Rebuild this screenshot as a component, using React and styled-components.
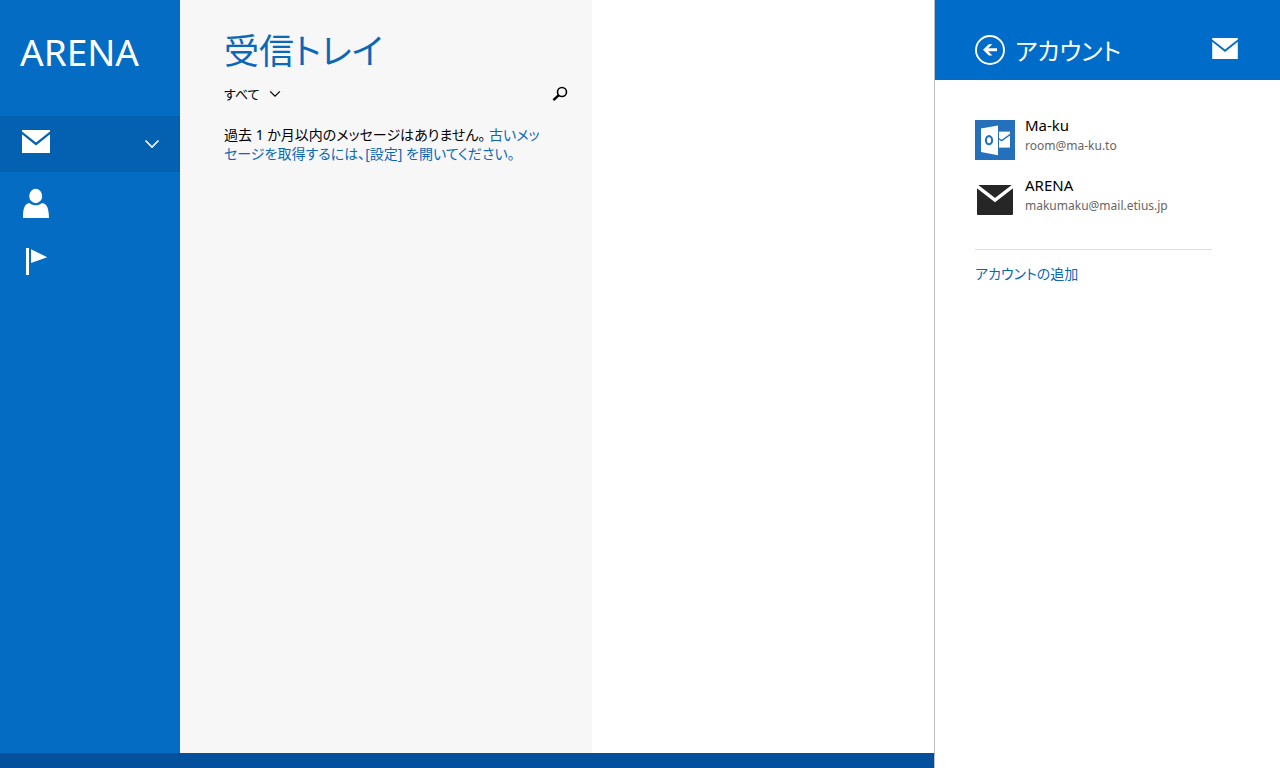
import styled, { createGlobalStyle } from 'styled-components';

const accounts = [
  { name: 'Ma-ku', address: 'room@ma-ku.to', type: 'outlook' },
  { name: 'ARENA', address: 'makumaku@mail.etius.jp', type: 'mail' },
];

const MailIcon = ({ width, height }) => (
  <svg width={width} height={height} viewBox='0 0 28 23' fill='currentColor'>
    <path d='M0 0H28V1.6L14 12.6L0 1.6Z' />
    <path d='M0 4.2L14 15.4L28 4.2V23H0Z' />
  </svg>
);

const PersonIcon = () => (
  <svg width='32' height='32' viewBox='0 0 32 32' fill='currentColor'>
    <ellipse cx='15.7' cy='10' rx='6.5' ry='7.2' />
    <path d='M3 32C3 25 3.6 20.5 6.4 18.2C7.6 17.2 9 17.2 10 17.3C13 20 18.4 20 21.4 17.3C22.5 17.2 24 17.2 25.2 18.2C28 20.5 28.8 25 29 32Z' />
  </svg>
);

const FlagIcon = () => (
  <svg width='32' height='32' viewBox='0 0 32 32' fill='currentColor'>
    <path d='M6 2H9V29H6Z' />
    <path d='M11 3.2L27.2 11.2L11 17Z' />
  </svg>
);

const ChevronIcon = ({ size, stroke }) => (
  <svg width={size} height={size} viewBox='0 0 16 16' fill='none'>
    <path d='M1.5 4.5L8 11L14.5 4.5' stroke='currentColor' strokeWidth={stroke} />
  </svg>
);

const SearchIcon = () => (
  <svg width='16' height='16' viewBox='0 0 16 16' fill='none'>
    <circle cx='10' cy='6' r='4.5' stroke='currentColor' strokeWidth='1.6' />
    <path d='M6.8 9.2L1.4 14.2' stroke='currentColor' strokeWidth='2.4' />
  </svg>
);

const BackIcon = () => (
  <svg width='30' height='30' viewBox='0 0 30 30' fill='none'>
    <circle cx='15' cy='15' r='14' stroke='currentColor' strokeWidth='1.9' />
    <path
      d='M8 14.8L13.8 9.2H17.4L13.2 13.3H22V16.3H13.2L17.4 20.4H13.8Z'
      fill='currentColor'
    />
  </svg>
);

const OutlookIcon = () => (
  <svg width='40' height='40' viewBox='0 0 40 40'>
    <rect width='40' height='40' fill='#2470bb' />
    <path d='M6 8.4L23 5.4V35.2L6 32Z' fill='#fff' />
    <path d='M24 11.6H35V27.6H24Z' fill='#fff' />
    <path d='M23.6 18.4L26.6 20.6L35.4 14.4' fill='none' stroke='#2470bb' strokeWidth='1.3' />
    <path d='M23.5 11V28' stroke='#2470bb' />
    <ellipse cx='14' cy='20.2' rx='3.1' ry='4.1' fill='none' stroke='#2470bb' strokeWidth='2.1' />
  </svg>
);

const DarkMailIcon = () => (
  <svg width='40' height='40' viewBox='0 0 40 40'>
    <rect x='2' y='5' width='36' height='30' rx='1' fill='#262626' />
    <path d='M0 4.6L20 20L40 4.6' fill='none' stroke='#fff' strokeWidth='3.4' />
  </svg>
);

const App = () => {
  return (
    <>
      <GlobalStyle />
      <Screen>
        <MailApp>
          <Columns>
            <Sidebar>
              <AccountTitle>ARENA</AccountTitle>
              <nav>
                <NavButton $active aria-label='メール'>
                  <MailSlot>
                    <MailIcon width={28} height={23} />
                  </MailSlot>
                  <ChevronIcon size={16} stroke={1.6} />
                </NavButton>
                <NavButton aria-label='People'>
                  <PersonIcon />
                </NavButton>
                <NavButton aria-label='フラグ'>
                  <FlagIcon />
                </NavButton>
              </nav>
            </Sidebar>
            <MessageList>
              <FolderTitle>受信トレイ</FolderTitle>
              <Toolbar>
                <Filter>
                  <FilterSelect aria-label='フィルター'>
                    <option>すべて</option>
                  </FilterSelect>
                  <ChevronIcon size={12} stroke={1.6} />
                </Filter>
                <SearchButton aria-label='検索'>
                  <SearchIcon />
                </SearchButton>
              </Toolbar>
              <EmptyText>
                過去 1 か月以内のメッセージはありません。{' '}
                <Link href='#settings'>
                  古いメッセージを取得するには、[設定] を開いてください。
                </Link>
              </EmptyText>
            </MessageList>
            <ReadingPane />
          </Columns>
          <BottomBar />
        </MailApp>
        <Flyout>
          <FlyoutHeader>
            <BackButton aria-label='戻る'>
              <BackIcon />
            </BackButton>
            <FlyoutTitle>アカウント</FlyoutTitle>
            <HeaderMail>
              <MailIcon width={26} height={21} />
            </HeaderMail>
          </FlyoutHeader>
          <FlyoutBody>
            {accounts.map((account) => (
              <AccountButton key={account.address}>
                {account.type === 'outlook' ? <OutlookIcon /> : <DarkMailIcon />}
                <AccountText>
                  <AccountName>{account.name}</AccountName>
                  <AccountAddress>{account.address}</AccountAddress>
                </AccountText>
              </AccountButton>
            ))}
            <AddAccount>
              <Link href='#add'>アカウントの追加</Link>
            </AddAccount>
          </FlyoutBody>
        </Flyout>
      </Screen>
    </>
  );
};

const GlobalStyle = createGlobalStyle`
  * {
    box-sizing: border-box;
  }
  body {
    margin: 0;
    background: #fff;
    color: #000;
    font-family: 'Noto Sans', 'Noto Sans CJK JP', sans-serif;
    font-feature-settings: 'palt';
  }
  button, select {
    margin: 0;
    padding: 0;
    border: 0;
    background: none;
    color: inherit;
    font: inherit;
    font-feature-settings: inherit;
    cursor: pointer;
  }
  svg {
    display: block;
    flex-shrink: 0;
  }
`;

const Screen = styled.div`
  display: flex;
  min-height: 100vh;
`;

const MailApp = styled.div`
  display: flex;
  flex: 1;
  flex-direction: column;
`;

const Columns = styled.div`
  display: flex;
  flex: 1;
`;

const Sidebar = styled.aside`
  width: 180px;
  background: #056cc4;
  color: #fff;
`;

const AccountTitle = styled.h1`
  margin: 0;
  padding: 28px 20px 40px;
  font-size: 37px;
  font-weight: 400;
  line-height: 48px;
`;

const NavButton = styled.button`
  display: flex;
  align-items: center;
  justify-content: space-between;
  width: 100%;
  height: ${(props) => (props.$active ? '56px' : '60px')};
  padding: 0 20px;
  background: ${(props) => (props.$active ? '#0461b1' : 'transparent')};
`;

const MailSlot = styled.span`
  height: 28px;
  padding-left: 2px;
`;

const MessageList = styled.main`
  width: 412px;
  padding: 28px 24px 0 44px;
  background: #f7f7f7;
`;

const FolderTitle = styled.h2`
  margin: 0;
  color: #0a68b8;
  font-size: 35px;
  font-weight: 400;
  line-height: 46px;
`;

const Toolbar = styled.div`
  display: flex;
  align-items: center;
  justify-content: space-between;
  height: 40px;
`;

const Filter = styled.label`
  display: flex;
  align-items: center;
  gap: 8px;
  font-size: 13px;
`;

const FilterSelect = styled.select`
  appearance: none;
  line-height: 20px;
`;

const SearchButton = styled.button`
  height: 20px;
`;

const EmptyText = styled.p`
  max-width: 322px;
  margin: 0;
  padding-top: 11px;
  font-size: 14px;
  line-height: 19px;
`;

const Link = styled.a`
  color: #0a68b8;
  text-decoration: none;
`;

const ReadingPane = styled.section`
  flex: 1;
  background: #fff;
`;

const BottomBar = styled.footer`
  height: 15px;
  background: #05509c;
`;

const Flyout = styled.aside`
  width: 346px;
  border-left: 1px solid #bdbdbd;
  background: #fff;
`;

const FlyoutHeader = styled.header`
  display: flex;
  align-items: center;
  height: 80px;
  padding: 20px 42px 0 40px;
  background: #006cca;
  color: #fff;
`;

const BackButton = styled.button`
  margin-right: 10px;
`;

const FlyoutTitle = styled.h2`
  flex: 1;
  margin: 0;
  padding-top: 2px;
  font-size: 24px;
  font-weight: 400;
  line-height: 32px;
`;

const HeaderMail = styled.span`
  padding-bottom: 4px;
`;

const FlyoutBody = styled.div`
  padding: 40px 68px 0 40px;
`;

const AccountButton = styled.button`
  display: flex;
  gap: 10px;
  width: 100%;
  margin-bottom: 20px;
  text-align: left;
`;

const AccountText = styled.span`
  display: flex;
  flex-direction: column;
`;

const AccountName = styled.span`
  padding-bottom: 10px;
  font-size: 15px;
  line-height: 10px;
`;

const AccountAddress = styled.span`
  color: #666;
  font-size: 12px;
  line-height: 12px;
`;

const AddAccount = styled.div`
  margin-top: 29px;
  padding-top: 14px;
  border-top: 1px solid #dedede;
  font-size: 14px;
  line-height: 20px;
`;

export default App;
